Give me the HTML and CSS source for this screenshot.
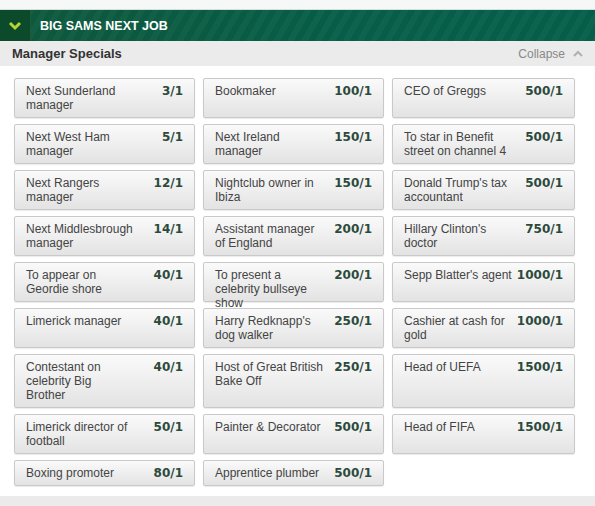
FILE: index.html
```html
<!DOCTYPE html>
<html lang="en">
<head>
    <meta charset="UTF-8">
    <meta name="viewport" content="width=device-width, initial-scale=1.0">
    <title>Big Sams Next Job</title>
    <link rel="stylesheet" href="styles.css">
</head>
<body>
    <div class="topstrip"></div>
    <div class="market-header">
        <div class="toggle">
            <svg width="14" height="10" viewBox="0 0 14 10"><path d="M2 2 L7 7 L12 2" fill="none" stroke="#b8d433" stroke-width="3"/></svg>
        </div>
        <div class="market-title">BIG SAMS NEXT JOB</div>
    </div>
    <div class="subheader">
        <span class="sub-title">Manager Specials</span>
        <span class="collapse">Collapse
            <svg width="10" height="7" viewBox="0 0 10 7"><path d="M1 6 L5 2 L9 6" fill="none" stroke="#b0b0b0" stroke-width="2"/></svg>
        </span>
    </div>
    <div class="selections">
        <div class="sel"><span class="name">Next Sunderland manager</span><span class="odds">3/1</span></div>
        <div class="sel"><span class="name">Bookmaker</span><span class="odds">100/1</span></div>
        <div class="sel"><span class="name">CEO of Greggs</span><span class="odds">500/1</span></div>

        <div class="sel"><span class="name">Next West Ham manager</span><span class="odds">5/1</span></div>
        <div class="sel"><span class="name">Next Ireland manager</span><span class="odds">150/1</span></div>
        <div class="sel"><span class="name">To star in Benefit street on channel 4</span><span class="odds">500/1</span></div>

        <div class="sel"><span class="name">Next Rangers manager</span><span class="odds">12/1</span></div>
        <div class="sel"><span class="name">Nightclub owner in Ibiza</span><span class="odds">150/1</span></div>
        <div class="sel"><span class="name">Donald Trump's tax accountant</span><span class="odds">500/1</span></div>

        <div class="sel"><span class="name">Next Middlesbrough manager</span><span class="odds">14/1</span></div>
        <div class="sel"><span class="name">Assistant manager of England</span><span class="odds">200/1</span></div>
        <div class="sel"><span class="name">Hillary Clinton's doctor</span><span class="odds">750/1</span></div>

        <div class="sel"><span class="name">To appear on Geordie shore</span><span class="odds">40/1</span></div>
        <div class="sel"><span class="name">To present a celebrity bullseye show</span><span class="odds">200/1</span></div>
        <div class="sel"><span class="name">Sepp Blatter's agent</span><span class="odds">1000/1</span></div>

        <div class="sel"><span class="name">Limerick manager</span><span class="odds">40/1</span></div>
        <div class="sel"><span class="name">Harry Redknapp's dog walker</span><span class="odds">250/1</span></div>
        <div class="sel"><span class="name">Cashier at cash for gold</span><span class="odds">1000/1</span></div>

        <div class="sel"><span class="name">Contestant on celebrity Big Brother</span><span class="odds">40/1</span></div>
        <div class="sel"><span class="name">Host of Great British Bake Off</span><span class="odds">250/1</span></div>
        <div class="sel"><span class="name">Head of UEFA</span><span class="odds">1500/1</span></div>

        <div class="sel"><span class="name">Limerick director of football</span><span class="odds">50/1</span></div>
        <div class="sel"><span class="name">Painter &amp; Decorator</span><span class="odds">500/1</span></div>
        <div class="sel"><span class="name">Head of FIFA</span><span class="odds">1500/1</span></div>

        <div class="sel"><span class="name">Boxing promoter</span><span class="odds">80/1</span></div>
        <div class="sel"><span class="name">Apprentice plumber</span><span class="odds">500/1</span></div>
    </div>
    <div class="footer"></div>
</body>
</html>
```

FILE: styles.css
```css
body {
    margin: 0;
    font-family: "Liberation Sans", Arial, sans-serif;
    background: #fff;
    width: 595px;
}
.topstrip {
    height: 9px;
    background: #f6f7f7;
    border-bottom: 1px solid #d5dfdb;
}
.market-header {
    display: flex;
    height: 31px;
    background-color: #07604a;
    background-image: repeating-linear-gradient(120deg, rgba(255,255,255,0.025) 0 6px, rgba(0,0,0,0.03) 6px 12px),
        linear-gradient(90deg, #0f5a3e 0%, #07604a 60%, #06604b 100%);
}
.toggle {
    width: 30px;
    display: flex;
    align-items: center;
    justify-content: center;
    background: #0c4a2c;
    border-right: 1px solid #1a5a3e;
}
.market-title {
    display: flex;
    align-items: center;
    padding-left: 9px;
    color: #fff;
    font-weight: bold;
    font-size: 12.5px;
}
.subheader {
    height: 25px;
    display: flex;
    align-items: center;
    justify-content: space-between;
    padding: 0 12px;
    background: #ebebeb;
}
.sub-title {
    font-weight: bold;
    font-size: 13px;
    color: #333;
}
.collapse {
    font-size: 12px;
    color: #888;
    display: flex;
    align-items: center;
    gap: 8px;
}
.selections {
    display: grid;
    grid-template-columns: 181px 181px 183px;
    grid-template-rows: repeat(6, 40px) 54px 40px 26px;
    column-gap: 8px;
    row-gap: 6px;
    padding: 12px 0 10px 14px;
}
.sel {
    display: flex;
    justify-content: space-between;
    align-items: flex-start;
    padding: 5px 11px 0 11px;
    border: 1px solid #c9c9c9;
    border-radius: 2px;
    background: linear-gradient(#fafafa, #e3e3e3);
    box-shadow: 0 1px 1px rgba(0,0,0,0.08);
    box-sizing: border-box;
    min-width: 0;
}
.name {
    width: 111px;
    font-size: 12px;
    line-height: 14px;
    color: #444;
}
.sel:nth-child(3n+1) .name {
    width: 107px;
}
.odds {
    font-family: "DejaVu Sans", Verdana, sans-serif;
    font-weight: bold;
    font-size: 12px;
    line-height: 14px;
    color: #2c4a3c;
    white-space: nowrap;
}
.footer {
    height: 10px;
    background: #ebebeb;
}
```
